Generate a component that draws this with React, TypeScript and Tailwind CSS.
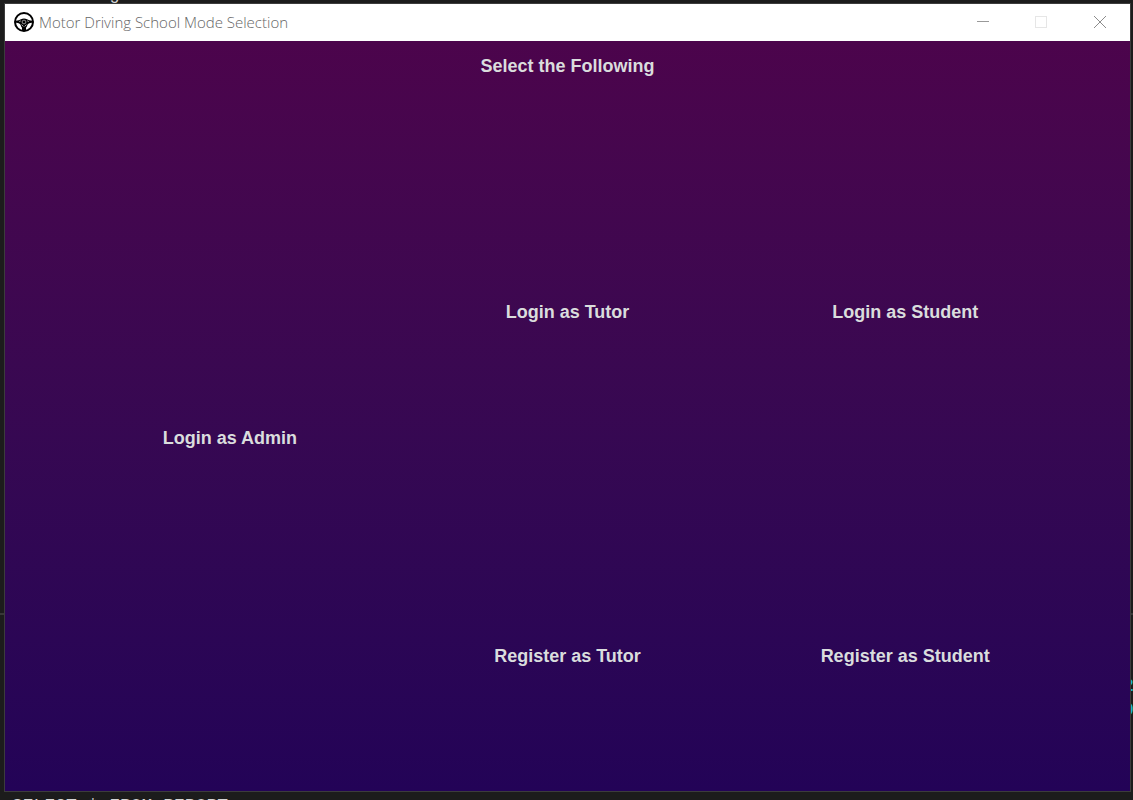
import React from 'react';

function WheelIcon() {
  return (
    <svg viewBox="0 0 20 20" className="size-5 shrink-0" aria-hidden="true">
      <circle cx="10" cy="10" r="9" fill="none" stroke="#000" strokeWidth="2" />
      <path
        d="M2 8.800C4 8.400 5.600 8 7 7.200c1.800-.8 4.200-.8 6 0 1.400.8 3 1.200 5 1.600v1.900c-2.800 0-4.200.9-4.700 2.500-.3 1-.7 1.800-1.300 2.600v2.200H8v-2.200c-.6-.8-1-1.600-1.300-2.600C6.200 11.600 4.800 10.700 2 10.700z"
        fill="#000"
      />
      <circle cx="10" cy="10" r="1.900" fill="none" stroke="#ccc" strokeWidth="0.700" />
      <path d="M6.800 8.900l-1.600.6M13.200 8.900l1.600.6M7.600 12.600l1.700 1.900M12.400 12.600l-1.700 1.900" stroke="#ddd" strokeWidth="0.800" />
    </svg>
  );
}

function Backdrop() {
  return (
    <div aria-hidden="true" className="absolute inset-0 overflow-hidden bg-[#1c1c1c] font-['Liberation_Mono',monospace] text-lg leading-5">
      <span className="absolute -top-4 left-[109px] text-[#d4d4d4]">g</span>
      <div className="absolute inset-x-0 top-[613px] h-0.5 bg-[#383838]" />
      <span className="absolute top-[676px] left-[1123px] font-bold text-[#1ab0d8]">2</span>
      <span className="absolute top-[700px] left-[1123px] font-bold text-[#1ab0d8]">0</span>
      <span className="absolute top-[796px] left-3 whitespace-pre text-[#d4d4d4]">SELECT * FROM REPORT</span>
    </div>
  );
}

function TitleBar() {
  return (
    <header className="flex h-[37px] shrink-0 items-center bg-white pb-0.5 pl-[9px]">
      <WheelIcon />
      <h1 className="ml-[5px] grow font-['Open_Sans',sans-serif] text-[15px] leading-5 font-light text-[#666666]">
        Motor Driving School Mode Selection
      </h1>
      <button type="button" aria-label="Minimize" className="flex h-full w-[58px] items-center justify-center">
        <svg viewBox="0 0 12 12" className="size-3" shapeRendering="crispEdges">
          <path d="M0 5.500h12" stroke="#999" />
        </svg>
      </button>
      <button type="button" aria-label="Maximize" disabled className="flex h-full w-[58px] items-center justify-center">
        <svg viewBox="0 0 12 12" className="size-3" shapeRendering="crispEdges">
          <path d="M.5.5h11v11H.5z" fill="none" stroke="#e6e6e6" />
        </svg>
      </button>
      <button type="button" aria-label="Close" className="flex h-full w-[60px] items-center justify-center">
        <svg viewBox="0 0 12 12" className="size-3">
          <path d="M0 0l12 12M12 0L0 12" stroke="#8c8c8c" />
        </svg>
      </button>
    </header>
  );
}

function ModeButton({ children }: { children: string }) {
  return (
    <button type="button" className="text-lg leading-6 font-bold">
      {children}
    </button>
  );
}

export default function App() {
  return (
    <div className="relative flex min-h-screen flex-col pt-[3px] pr-0.5 pb-2 pl-1">
      <Backdrop />
      <div className="relative flex grow flex-col border border-[#3c3c3c]">
        <TitleBar />
        <main className="flex grow flex-col bg-linear-to-b from-[#4c044c] to-[#230357] px-14 pt-[13px] font-['Liberation_Sans',Arial,sans-serif] text-[#dadddd]">
          <h2 className="text-center text-lg leading-6 font-bold">Select the Following</h2>
          <div className="grid grow grid-cols-3 pt-[222px] pb-[123px]">
            <div className="flex flex-col items-center pt-[126px]">
              <ModeButton>Login as Admin</ModeButton>
            </div>
            <div className="flex flex-col items-center justify-between">
              <ModeButton>Login as Tutor</ModeButton>
              <ModeButton>Register as Tutor</ModeButton>
            </div>
            <div className="flex flex-col items-center justify-between">
              <ModeButton>Login as Student</ModeButton>
              <ModeButton>Register as Student</ModeButton>
            </div>
          </div>
        </main>
      </div>
    </div>
  );
}
